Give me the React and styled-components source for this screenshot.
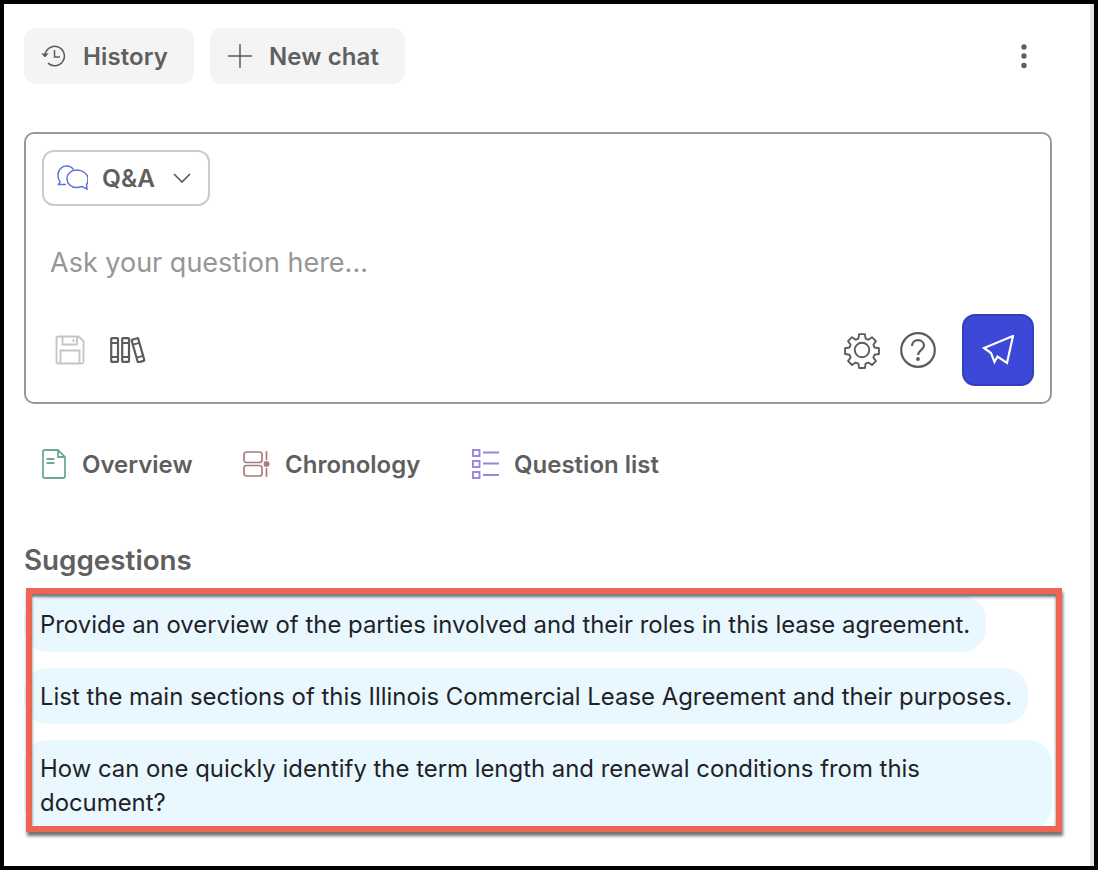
import React from "react";
import styled, { createGlobalStyle } from "styled-components";

const GlobalStyle = createGlobalStyle`
  html, body {
    margin: 0;
    padding: 0;
    background: #000;
  }
  * {
    box-sizing: border-box;
  }
`;

const HistoryIcon = () => (
  <svg width="25" height="24" viewBox="0 0 25 24" fill="none" stroke="#5c5c5c" strokeWidth="1.5">
    <path d="M4 11.5a9.7 9.7 0 1 1 3 7.6" />
    <path d="M1 9.5l3 3.4 3-3.4" fill="#5c5c5c" strokeWidth="1" />
    <path d="M13.5 6v7h5.5" />
  </svg>
);

const PlusIcon = () => (
  <svg width="24" height="24" viewBox="0 0 24 24" fill="none" stroke="#5c5c5c" strokeWidth="1.5">
    <path d="M12 0v24M0 12h24" />
  </svg>
);

const DotsIcon = () => (
  <svg width="8" height="26" viewBox="0 0 8 26" fill="#5f5f5f">
    <circle cx="4" cy="4" r="2.7" />
    <circle cx="4" cy="13" r="2.7" />
    <circle cx="4" cy="22.5" r="2.7" />
  </svg>
);

const ChatIcon = () => (
  <svg width="31" height="26" viewBox="0 0 31 26" fill="none" stroke="#5b73d3" strokeWidth="1.5">
    <path d="M9 19.500H1.500l1.600-2.600C1.600 15 1 12.800 1 10.500 1 5 4.500 1 9.500 1c3 0 5.500 1.200 7 3.500" />
    <path d="M19.500 5c-5.500 0-9.500 3.700-9.500 8.700s4 8.800 9.500 8.800c2 0 3.600-.3 5-1.200l5.500 2.700-.5-4.200c1-1.600 1.500-3.300 1.500-5.800C31 8.700 25.500 5 19.500 5z" />
  </svg>
);

const ChevronIcon = () => (
  <svg width="18" height="10" viewBox="0 0 18 10" fill="none" stroke="#555" strokeWidth="1.6">
    <path d="M1 1l8 8 8-8" />
  </svg>
);

const SaveIcon = () => (
  <svg width="30" height="30" viewBox="0 0 30 30" fill="none" stroke="#c4c4c4" strokeWidth="1.8">
    <path d="M1.500 3a1.500 1.500 0 0 1 1.500-1.500h20.500L28.500 6v21a1.500 1.500 0 0 1-1.500 1.500H3A1.500 1.500 0 0 1 1.500 27z" />
    <path d="M7.500 1.500V9.500h14.500V1.500M18.500 4v3" />
    <path d="M5.500 28.500V15.500h19v13" />
  </svg>
);

const BooksIcon = () => (
  <svg width="36" height="26" viewBox="0 0 36 26" fill="none" stroke="#5c5c5c" strokeWidth="2.2">
    <rect x="1.200" y="1.200" width="6.800" height="23.600" rx="0.800" />
    <path d="M1.200 6h6.800M1.200 20h6.800" strokeWidth="1.800" />
    <rect x="12.200" y="1.200" width="6.800" height="23.600" rx="0.800" />
    <path d="M12.200 6h6.800M12.200 20h6.800" strokeWidth="1.800" />
    <g transform="rotate(-16 28 13)">
      <rect x="24.500" y="1.500" width="6.800" height="23.500" rx="0.800" />
      <path d="M24.500 6.500h6.800M24.500 20h6.800" strokeWidth="1.800" />
    </g>
  </svg>
);

const GearIcon = () => (
  <svg width="38" height="38" viewBox="0 0 24 24" fill="none" stroke="#5c5c5c" strokeWidth="1.200" strokeLinejoin="round">
    <path d="M10.200 2h3.600l.5 2.800 1.700.7 2.300-1.600 2.500 2.500-1.600 2.300.7 1.700 2.800.5v3.600l-2.800.5-.7 1.700 1.600 2.300-2.500 2.500-2.300-1.600-1.700.7-.5 2.800h-3.600l-.5-2.800-1.700-.7-2.300 1.600-2.500-2.500 1.600-2.300-.7-1.700-2.800-.5v-3.600l2.800-.5.7-1.700-1.600-2.300 2.500-2.500 2.300 1.600 1.700-.7z" />
    <circle cx="12" cy="12" r="4.600" />
  </svg>
);

const HelpIcon = () => (
  <svg width="36" height="36" viewBox="0 0 36 36" fill="none" stroke="#5c5c5c" strokeWidth="2.2">
    <circle cx="18" cy="18" r="16.800" />
    <path d="M12 14c0-3.500 2.700-5.800 6-5.800s6 2.300 6 5.400c0 4.400-6 4.600-6 9.400" />
    <circle cx="18" cy="27" r="1.900" fill="#5c5c5c" stroke="none" />
  </svg>
);

const SendIcon = () => (
  <svg width="32" height="30" viewBox="0 0 32 30" fill="none" stroke="#fff" strokeWidth="2.2" strokeLinejoin="miter">
    <path d="M31 1L2 13l7 5 3.500 9 3-5.500L25 28z" />
  </svg>
);

const DocIcon = () => (
  <svg width="24" height="30" viewBox="0 0 24 30" fill="none" stroke="#6fa994" strokeWidth="1.800">
    <path d="M2.500 1h13.500L23 8v19.500a1.500 1.500 0 0 1-1.500 1.500h-19A1.500 1.500 0 0 1 1 27.500v-25A1.500 1.500 0 0 1 2.500 1z" />
    <path d="M16 1v7h7" />
    <path d="M4.500 10h8M4.500 14h8" />
  </svg>
);

const TimelineIcon = () => (
  <svg width="27" height="26" viewBox="0 0 27 26" fill="none" stroke="#ad7a80" strokeWidth="1.700">
    <rect x="1" y="1" width="18" height="10.500" rx="2.500" />
    <rect x="1" y="14.500" width="18" height="10.500" rx="2.500" />
    <path d="M23.500 0v9M23.500 17v9" />
    <circle cx="23.500" cy="13" r="3" fill="#ad7a80" stroke="none" />
  </svg>
);

const ListIcon = () => (
  <svg width="27" height="30" viewBox="0 0 27 30" fill="none" stroke="#9a84de" strokeWidth="1.900">
    <rect x="1" y="1" width="6.500" height="6" />
    <rect x="1" y="12" width="6.500" height="6" />
    <rect x="1" y="23" width="6.500" height="6" />
    <path d="M11 3.500h16M11 14.500h16M11 26h16" />
  </svg>
);

const suggestions = [
  "Provide an overview of the parties involved and their roles in this lease agreement.",
  "List the main sections of this Illinois Commercial Lease Agreement and their purposes.",
  "How can one quickly identify the term length and renewal conditions from this document?",
];

export default function App() {
  return (
    <>
      <GlobalStyle />
      <Frame>
        <Panel>
          <TopBar>
            <TopActions>
              <TopButton $left={17} $width={170}>
                <HistoryIcon />
                History
              </TopButton>
              <TopButton $left={18} $width={195}>
                <PlusIcon />
                New chat
              </TopButton>
            </TopActions>
            <MoreButton>
              <DotsIcon />
            </MoreButton>
          </TopBar>

          <Composer>
            <ModeSelect>
              <ChatIcon />
              <ModeLabel>Q&amp;A</ModeLabel>
              <ChevronIcon />
            </ModeSelect>
            <Prompt placeholder="Ask your question here..." />
            <ComposerFooter>
              <ToolGroup $gap={25}>
                <SaveIcon />
                <BooksIcon />
              </ToolGroup>
              <ToolGroup $gap={19}>
                <GearIcon />
                <HelpIcon />
                <SendButton>
                  <SendIcon />
                </SendButton>
              </ToolGroup>
            </ComposerFooter>
          </Composer>

          <Tabs>
            <Tab $width={201} $gap={16}>
              <DocIcon />
              Overview
            </Tab>
            <Tab $width={229} $gap={15}>
              <TimelineIcon />
              Chronology
            </Tab>
            <Tab $gap={15}>
              <ListIcon />
              Question list
            </Tab>
          </Tabs>

          <SectionTitle>Suggestions</SectionTitle>
          <SuggestionList>
            {suggestions.map((text) => (
              <Suggestion key={text}>{text}</Suggestion>
            ))}
            <Highlight />
          </SuggestionList>
        </Panel>
        <Scrollbar />
      </Frame>
    </>
  );
}

const Frame = styled.div`
  width: 1098px;
  height: 870px;
  padding: 4px;
  background: #000;
  display: flex;
  overflow: hidden;
`;

const Panel = styled.div`
  flex: 1;
  background: #fff;
  padding: 24px 38px 0 20px;
  font-family: Inter, "Liberation Sans", sans-serif;
`;

const Scrollbar = styled.div`
  width: 4px;
  background: #e4e4e4;
`;

const TopBar = styled.div`
  display: flex;
  align-items: center;
  justify-content: space-between;
`;

const TopActions = styled.div`
  display: flex;
  gap: 16px;
`;

const TopButton = styled.button`
  width: ${(p) => p.$width}px;
  height: 56px;
  display: flex;
  align-items: center;
  gap: 17px;
  padding: 0 0 0 ${(p) => p.$left}px;
  border: none;
  border-radius: 12px;
  background: #f4f4f4;
  color: #5f5f5f;
  font-family: inherit;
  font-size: 24px;
  font-weight: 600;
  letter-spacing: 0.1px;
`;

const MoreButton = styled.div`
  display: flex;
  margin-right: 24px;
`;

const Composer = styled.div`
  margin-top: 48px;
  height: 272px;
  border: 2px solid #999;
  border-radius: 10px;
  padding: 16px;
  display: flex;
  flex-direction: column;
`;

const ModeSelect = styled.div`
  width: 168px;
  height: 56px;
  display: flex;
  align-items: center;
  padding-left: 13px;
  border: 2px solid #ccc;
  border-radius: 12px;
`;

const ModeLabel = styled.span`
  margin: 0 18px 0 14px;
  color: #5f5f5f;
  font-size: 24.500px;
  font-weight: 600;
`;

const Prompt = styled.input`
  margin-top: 38px;
  padding: 0 0 0 8px;
  height: 36px;
  border: none;
  outline: none;
  background: transparent;
  font-family: inherit;
  font-size: 27px;

  &::placeholder {
    color: #969696;
    opacity: 1;
  }
`;

const ComposerFooter = styled.div`
  margin-top: auto;
  display: flex;
  align-items: center;
  justify-content: space-between;
  padding-left: 13px;
`;

const ToolGroup = styled.div`
  display: flex;
  align-items: center;
  gap: ${(p) => p.$gap}px;
`;

const SendButton = styled.button`
  width: 72px;
  height: 72px;
  margin-left: 7px;
  display: flex;
  align-items: center;
  justify-content: center;
  padding: 0;
  border: 2px solid #3140bb;
  border-radius: 13px;
  background: #3b48d8;
`;

const Tabs = styled.div`
  margin-top: 44px;
  height: 32px;
  display: flex;
  align-items: center;
  padding-left: 18px;
`;

const Tab = styled.div`
  display: flex;
  align-items: center;
  gap: ${(p) => p.$gap}px;
  width: ${(p) => (p.$width ? `${p.$width}px` : "auto")};
  color: #5f5f5f;
  font-size: 24px;
  font-weight: 600;
`;

const SectionTitle = styled.h2`
  margin: 0;
  margin-top: 64px;
  color: #5f5f5f;
  font-size: 27.800px;
  font-weight: 600;
  line-height: 32px;
`;

const SuggestionList = styled.div`
  position: relative;
  margin-top: 20px;
  display: flex;
  flex-direction: column;
  align-items: flex-start;
  gap: 16px;
`;

const Suggestion = styled.div`
  padding: 12px 16px 10px;
  border-radius: 24px;
  background: #e9f8fe;
  color: #1f2328;
  font-size: 23.900px;
  line-height: 34px;
`;

const Highlight = styled.div`
  position: absolute;
  left: 2px;
  top: -8px;
  width: 1036px;
  height: 244px;
  border: 6px solid #ec6557;
  box-shadow: 1px 4px 3px rgba(70, 70, 70, 0.75), inset 0 3px 3px rgba(70, 70, 70, 0.75);
`;
